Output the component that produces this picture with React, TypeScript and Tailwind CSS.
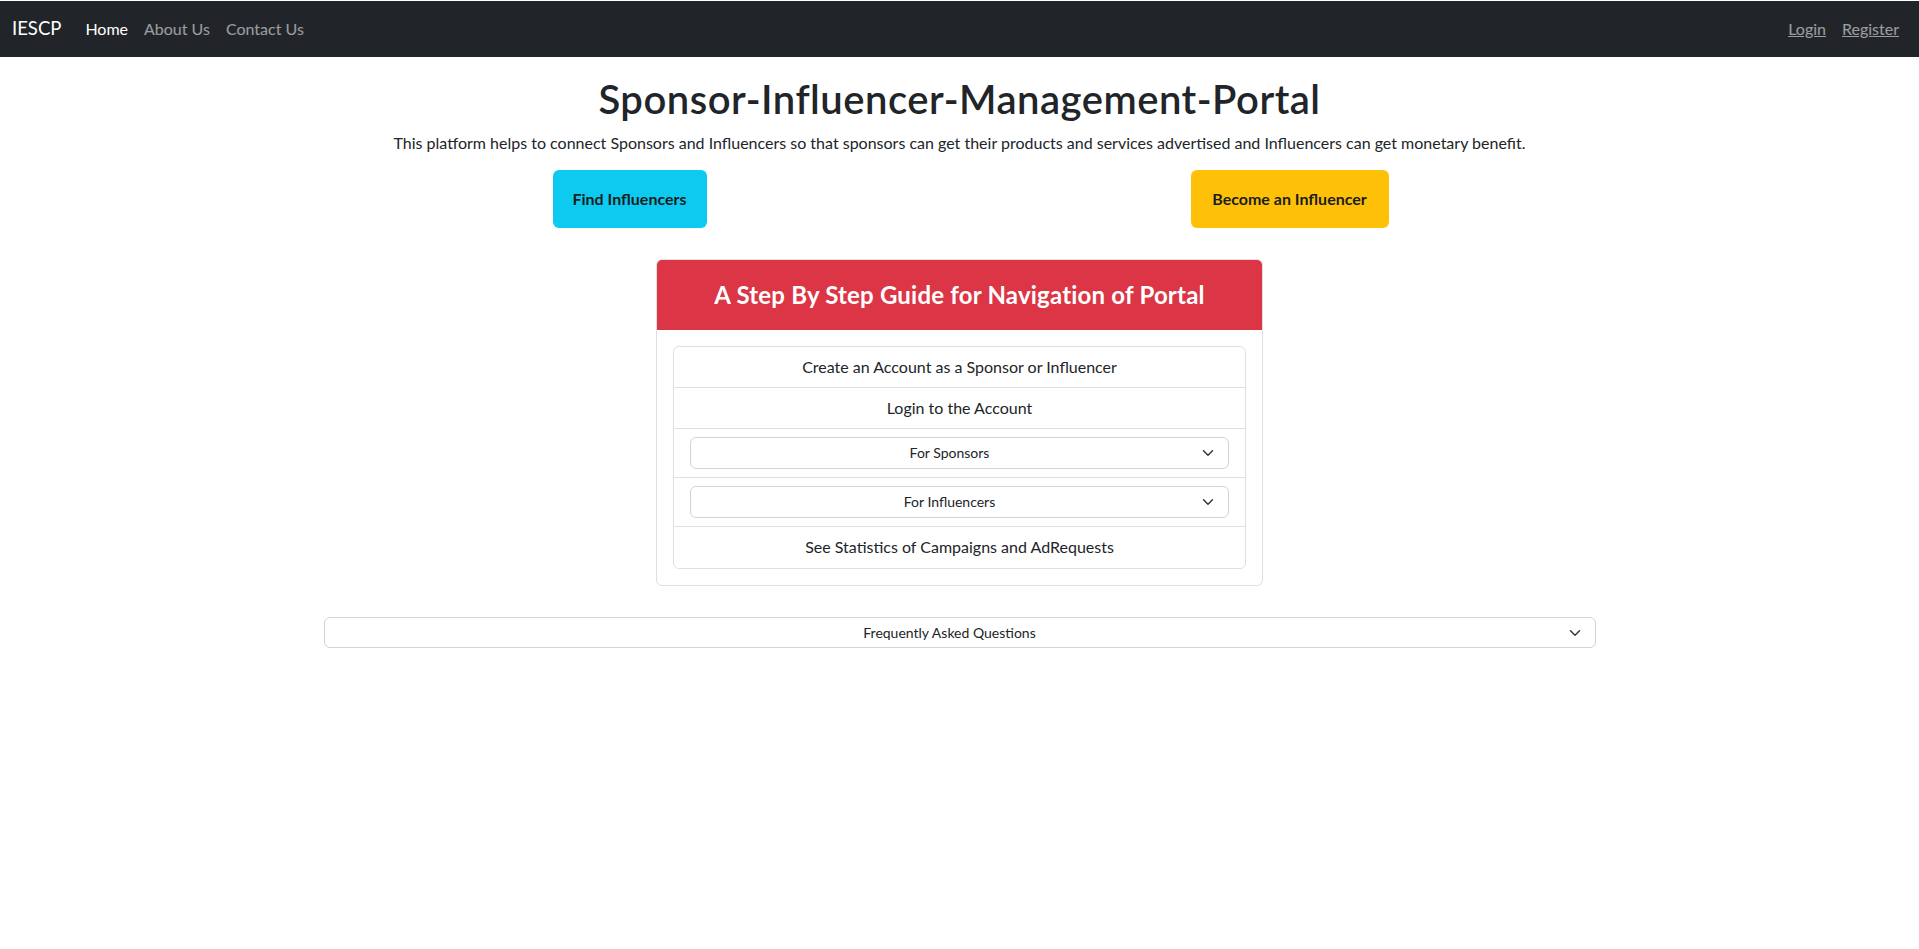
import React from "react"

const FONT = 'font-["Lato",sans-serif]'

const Chevron = () => (
    <svg width="16" height="12" viewBox="0 0 16 16" className="shrink-0" fill="none">
        <path d="m2 5 6 6 6-6" stroke="#343a40" strokeWidth="2" strokeLinecap="round" strokeLinejoin="round" />
    </svg>
)

const SelectBox = ({ label, className = "" }: { label: string, className?: string }) => (
    <div className={`flex items-center border border-[#ced4da] rounded-md bg-white text-sm text-[#212529] pl-2 pr-3 ${className}`}>
        <span className="flex-1 text-center">{label}</span>
        <Chevron />
    </div>
)

export default function App() {
    return (
        <div className={`min-h-screen bg-white text-[#212529] ${FONT}`}>
            <nav className="flex items-center justify-between h-[56px] mt-px bg-[#212529] px-3">
                <div className="flex items-center">
                    <span className="text-white text-[18.5px] mr-4">IESCP</span>
                    <a className="text-white px-2">Home</a>
                    <a className="text-white/55 px-2">About Us</a>
                    <a className="text-white/55 px-2">Contact Us</a>
                </div>
                <div className="flex items-center gap-4 pr-2">
                    <a className="text-white/55 underline">Login</a>
                    <a className="text-white/55 underline">Register</a>
                </div>
            </nav>

            <div className="w-[1320px] mx-auto px-3 text-center">
                <h1 className="text-[40px] leading-[48px] font-semibold tracking-[0.5px] mt-[18px] mb-2">Sponsor-Influencer-Management-Portal</h1>
                <p className="text-base leading-6 mb-[15px]">This platform helps to connect Sponsors and Influencers so that sponsors can get their products and services advertised and Influencers can get monetary benefit.</p>
                <div className="grid grid-cols-2 -mx-3">
                    <div className="flex justify-center">
                        <button className="h-[58px] w-[154px] rounded-md bg-[#0dcaf0] font-bold text-[#1a1d20]">Find Influencers</button>
                    </div>
                    <div className="flex justify-center">
                        <button className="h-[58px] w-[198px] rounded-md bg-[#ffc107] font-bold text-[#1a1d20]">Become an Influencer</button>
                    </div>
                </div>

                <div className="w-[607px] mx-auto mt-[31px] border border-[#dfdfdf] rounded-md overflow-hidden">
                    <div className="h-[70px] flex items-center justify-center bg-[#dc3545] text-white text-2xl font-bold tracking-[0.2px]">
                        A Step By Step Guide for Navigation of Portal
                    </div>
                    <div className="p-4">
                        <div className="border border-[#dfdfdf] rounded-md">
                            <div className="py-2 leading-6 border-b border-[#dfdfdf]">Create an Account as a Sponsor or Influencer</div>
                            <div className="py-2 leading-6 border-b border-[#dfdfdf]">Login to the Account</div>
                            <div className="p-2 px-4 border-b border-[#dfdfdf]"><SelectBox label="For Sponsors" className="h-[32px]" /></div>
                            <div className="p-2 px-4 border-b border-[#dfdfdf]"><SelectBox label="For Influencers" className="h-[32px]" /></div>
                            <div className="pt-2 pb-[9px] leading-6">See Statistics of Campaigns and AdRequests</div>
                        </div>
                    </div>
                </div>

                <SelectBox label="Frequently Asked Questions" className="h-[31px] mt-[31px] mx-3" />
            </div>
        </div>
    )
}
